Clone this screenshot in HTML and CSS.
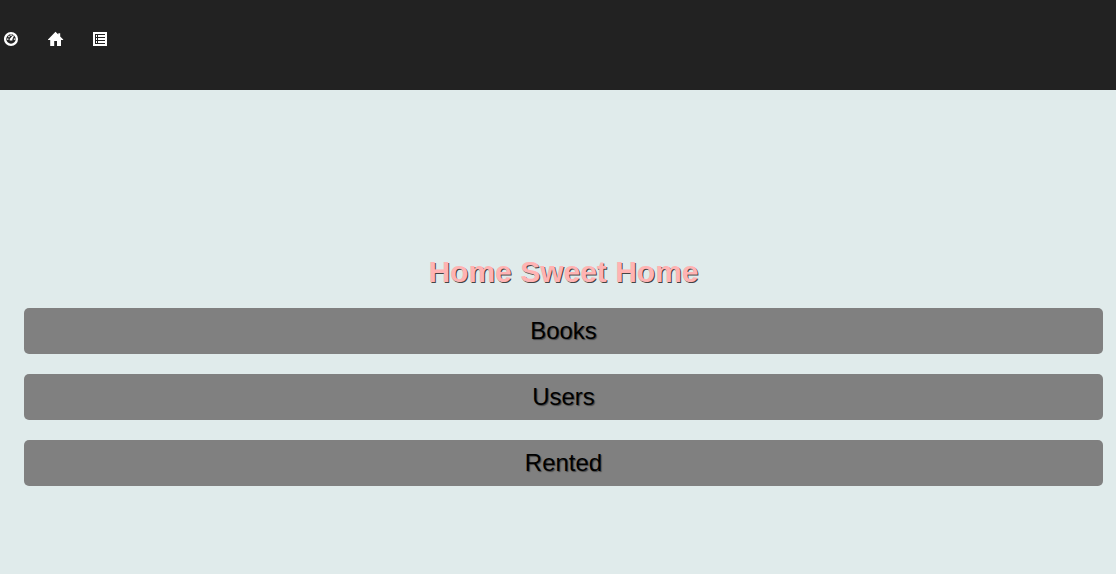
FILE: index.html
```html
<!DOCTYPE html>
<html lang="en">
<head>
<meta charset="utf-8">
<meta name="viewport" content="width=device-width, initial-scale=1">
<title>Home Sweet Home</title>
<link rel="stylesheet" href="styles.css">
</head>
<body>
<nav class="navbar" aria-label="Main">
  <a class="nav-link" href="#dashboard" aria-label="Dashboard">
    <svg class="icon" viewBox="0 0 16 16" aria-hidden="true">
      <circle cx="7" cy="8" r="5.9" fill="none" stroke="currentColor" stroke-width="2.3"/>
      <path d="M3 7.4h1.5v1.4H3zM4.3 4.8h1.4v1.4H4.3zM6.4 3.6h1.3v1.4H6.4zM9.8 7.4h1.5v1.4H9.8z" fill="currentColor"/>
      <path d="M9 4.2l1 .6-1.6 3.4v1.4H5.7V8z" fill="currentColor"/>
    </svg>
  </a>
  <a class="nav-link" href="#home" aria-label="Home">
    <svg class="icon" viewBox="0 0 16 16" aria-hidden="true">
      <path d="M7.5 0.8L10.3 3.5V2.2H12.2V5.4L15.2 8.4V9H13V15H9V10H6.2V15H2.2V9H0V8.4z" fill="currentColor"/>
    </svg>
  </a>
  <a class="nav-link" href="#list" aria-label="List">
    <svg class="icon" viewBox="0 0 16 16" aria-hidden="true">
      <path fill="currentColor" fill-rule="evenodd" d="M1 1h14v14H1zM3 3v10h10V3z"/>
      <path fill="currentColor" d="M4 4h1v2H4zM6 4h7v2H6zM4 7h1v2H4zM6 7h7v2H6zM4 10h1v2H4zM6 10h7v2H6z"/>
    </svg>
  </a>
</nav>
<main class="content">
  <h1 class="title">Home Sweet Home</h1>
  <div class="menu">
    <button class="menu-button" type="button">Books</button>
    <button class="menu-button" type="button">Users</button>
    <button class="menu-button" type="button">Rented</button>
  </div>
</main>
</body>
</html>
```

FILE: styles.css
```css
* {
  box-sizing: border-box;
}

body {
  margin: 0;
  background: #e0ebeb;
  font-family: "Liberation Sans", Arial, sans-serif;
}

.navbar {
  display: flex;
  align-items: flex-start;
  gap: 28px;
  min-height: 90px;
  padding: 31px 4px;
  background: #222;
}

.nav-link {
  display: block;
  color: #fff;
}

.icon {
  display: block;
  width: 16px;
  height: 16px;
}

.content {
  padding: 164px 13px 20px 24px;
  text-align: center;
}

.title {
  margin: 0 0 18px;
  font-size: 30px;
  line-height: 36px;
  font-weight: 700;
  color: #ffb3b3;
  text-shadow: 1px 1px #444;
}

.menu {
  display: flex;
  flex-direction: column;
  gap: 20px;
}

.menu-button {
  padding: 6px 12px;
  border: 0;
  border-radius: 5px;
  background: gray;
  color: #000;
  font-family: inherit;
  font-size: 24px;
  line-height: 34px;
  text-shadow: 1px 1px 1px #444;
  cursor: pointer;
}
```
